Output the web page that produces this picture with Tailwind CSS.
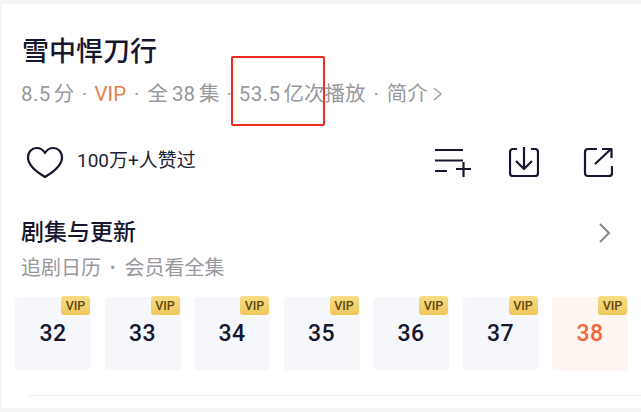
<!DOCTYPE html>
<html lang="zh">
<head>
    <meta charset="UTF-8">
    <title>雪中悍刀行</title>
    <script src="https://cdn.jsdelivr.net/npm/@tailwindcss/browser@4"></script>
</head>
<body class="bg-[#f5f5f5] w-[641px] h-[412px] overflow-hidden font-['Roboto','Noto_Sans_CJK_SC',sans-serif]">
    <div class="relative ml-[2px] mt-[4px] h-[404px] bg-white overflow-hidden">
        <!-- Title -->
        <h1 class="ml-[20px] pt-[30px] h-[65px] text-[27px] leading-[36px] font-medium text-[#16162e]">雪中悍刀行</h1>

        <!-- Meta row -->
        <div class="ml-[19px] mt-[10px] h-[30px] flex items-center text-[20.5px] text-[#98989e] whitespace-nowrap">
            <span class="tracking-[0.4px]">8.5</span>
            <span class="ml-[3px]">分</span>
            <span class="mx-[7.5px]">·</span>
            <span class="text-[#e2814f]">VIP</span>
            <span class="mx-[8px]">·</span>
            <span>全</span>
            <span class="mx-[4px]">38</span>
            <span>集</span>
            <span class="mx-[7px]">·</span>
            <span class="tracking-[0.4px]">53.5</span>
            <span class="ml-[3px]">亿次播放</span>
            <span class="mx-[8px]">·</span>
            <span>简介</span>
            <svg class="ml-[4px]" width="12" height="16" viewBox="0 0 12 16" fill="none" stroke="#a4a4a8" stroke-width="1.6"><path d="M2 2l7 6-7 6"/></svg>
        </div>

        <!-- Actions -->
        <div class="mt-[32px] h-[40px] flex items-center">
            <svg class="ml-[24px]" width="38" height="40" viewBox="0 0 38 40" fill="none" stroke="#16162e" stroke-width="2.200" stroke-linejoin="round"><path d="M19 36C14 33 2 26 2 16.500C2 10.500 6.300 7 10.500 7C14 7 17.300 9 19 12C20.700 9 24 7 27.500 7C31.700 7 36 10.500 36 16.500C36 26 24 33 19 36Z"/></svg>
            <span class="ml-[13px] text-[19px] text-[#1f1f33]">100万+人赞过</span>
            <div class="ml-auto flex items-center mr-[28px]">
                <svg width="37" height="40" viewBox="0 0 37 40" fill="none" stroke="#16162e" stroke-width="2.200"><path d="M0 9h28M0 19.500h28M0 30h12M21 28h15M28.500 21v15"/></svg>
                <svg class="ml-[37px]" width="30" height="40" viewBox="0 0 30 40" fill="none" stroke="#16162e" stroke-width="2.200" stroke-linejoin="round"><path d="M8 8H4a3 3 0 0 0-3 3v21a3 3 0 0 0 3 3h22a3 3 0 0 0 3-3V11a3 3 0 0 0-3-3h-4M15 6v22M7 20l8 8 8-8"/></svg>
                <svg class="ml-[44px]" width="30" height="40" viewBox="0 0 30 40" fill="none" stroke="#16162e" stroke-width="2.200" stroke-linejoin="round"><path d="M14 8H5a3 3 0 0 0-3 3v21a3 3 0 0 0 3 3h21a3 3 0 0 0 3-3v-7M12 23L28 8M19 8h9.500v9"/></svg>
            </div>
        </div>

        <!-- Episodes header -->
        <div class="mt-[37px] h-[30px] flex items-center">
            <h2 class="ml-[19px] text-[23px] font-medium text-[#16162e]">剧集与更新</h2>
            <svg class="ml-auto mr-[29px]" width="14" height="22" viewBox="0 0 14 22" fill="none" stroke="#85858a" stroke-width="2"><path d="M2 2l9 9-9 9"/></svg>
        </div>
        <div class="ml-[19px] mt-[8px] h-[24px] flex items-center text-[20px] text-[#98989e]">
            <span>追剧日历</span>
            <span class="mx-[9px] text-[16px]">•</span>
            <span>会员看全集</span>
        </div>

        <!-- Episodes -->
        <div class="ml-[13px] mt-[17px] flex gap-[13.5px]">
            <div class="relative w-[76px] h-[73px] bg-[#f5f7fb] rounded-[3px] flex items-center justify-center text-[23px] font-medium tracking-[0.5px] text-[#16162e]"><span class="mt-[2px]">32</span><span class="absolute -top-[1px] right-[1px] w-[29px] h-[19px] rounded-[3px] bg-linear-to-b from-[#f7dd85] to-[#eec75c] text-[12.5px] leading-[19px] text-center tracking-normal text-[#5f4710]">VIP</span></div>
            <div class="relative w-[76px] h-[73px] bg-[#f5f7fb] rounded-[3px] flex items-center justify-center text-[23px] font-medium tracking-[0.5px] text-[#16162e]"><span class="mt-[2px]">33</span><span class="absolute -top-[1px] right-[1px] w-[29px] h-[19px] rounded-[3px] bg-linear-to-b from-[#f7dd85] to-[#eec75c] text-[12.5px] leading-[19px] text-center tracking-normal text-[#5f4710]">VIP</span></div>
            <div class="relative w-[76px] h-[73px] bg-[#f5f7fb] rounded-[3px] flex items-center justify-center text-[23px] font-medium tracking-[0.5px] text-[#16162e]"><span class="mt-[2px]">34</span><span class="absolute -top-[1px] right-[1px] w-[29px] h-[19px] rounded-[3px] bg-linear-to-b from-[#f7dd85] to-[#eec75c] text-[12.5px] leading-[19px] text-center tracking-normal text-[#5f4710]">VIP</span></div>
            <div class="relative w-[76px] h-[73px] bg-[#f5f7fb] rounded-[3px] flex items-center justify-center text-[23px] font-medium tracking-[0.5px] text-[#16162e]"><span class="mt-[2px]">35</span><span class="absolute -top-[1px] right-[1px] w-[29px] h-[19px] rounded-[3px] bg-linear-to-b from-[#f7dd85] to-[#eec75c] text-[12.5px] leading-[19px] text-center tracking-normal text-[#5f4710]">VIP</span></div>
            <div class="relative w-[76px] h-[73px] bg-[#f5f7fb] rounded-[3px] flex items-center justify-center text-[23px] font-medium tracking-[0.5px] text-[#16162e]"><span class="mt-[2px]">36</span><span class="absolute -top-[1px] right-[1px] w-[29px] h-[19px] rounded-[3px] bg-linear-to-b from-[#f7dd85] to-[#eec75c] text-[12.5px] leading-[19px] text-center tracking-normal text-[#5f4710]">VIP</span></div>
            <div class="relative w-[76px] h-[73px] bg-[#f5f7fb] rounded-[3px] flex items-center justify-center text-[23px] font-medium tracking-[0.5px] text-[#16162e]"><span class="mt-[2px]">37</span><span class="absolute -top-[1px] right-[1px] w-[29px] h-[19px] rounded-[3px] bg-linear-to-b from-[#f7dd85] to-[#eec75c] text-[12.5px] leading-[19px] text-center tracking-normal text-[#5f4710]">VIP</span></div>
            <div class="relative w-[76px] h-[73px] bg-[#fff5f1] rounded-[3px] flex items-center justify-center text-[23px] font-medium tracking-[0.5px] text-[#f0673a]"><span class="mt-[2px]">38</span><span class="absolute -top-[1px] right-[1px] w-[29px] h-[19px] rounded-[3px] bg-linear-to-b from-[#f7dd85] to-[#eec75c] text-[12.5px] leading-[19px] text-center tracking-normal text-[#5f4710]">VIP</span></div>
        </div>

        <!-- Divider -->
        <div class="ml-[25px] mt-[25px] h-px bg-[#f0f0f0]"></div>

        <!-- Red annotation box -->
        <div class="absolute left-[229px] top-[52px] w-[94px] h-[70px] border-2 border-[#f02a20] rounded-[2px]"></div>
    </div>
</body>
</html>
